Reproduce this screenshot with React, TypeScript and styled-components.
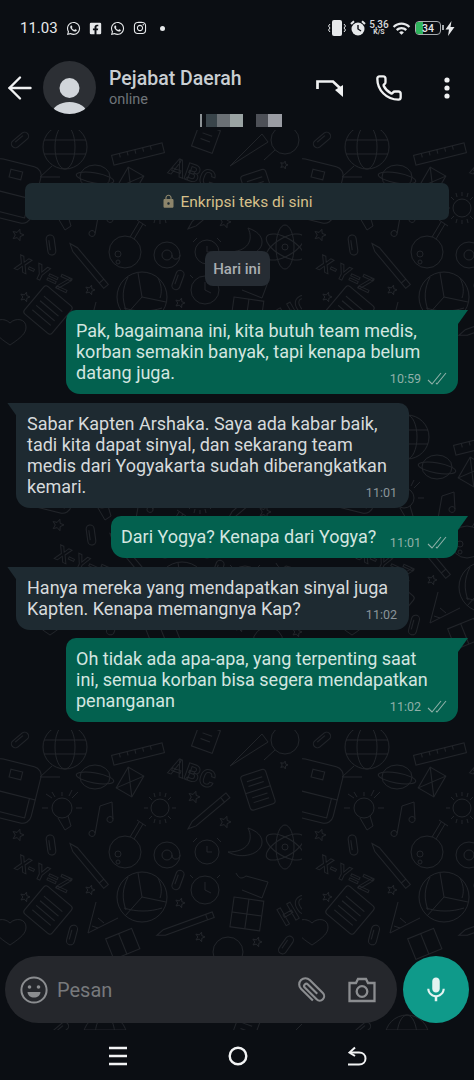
import React from 'react';
import styled, { createGlobalStyle } from 'styled-components';
import { FaWhatsapp, FaFacebookSquare, FaInstagram } from 'react-icons/fa';
import { MdLock, MdMic, MdWifi } from 'react-icons/md';
import { ArrowLeft, Phone } from 'lucide-react';

const GlobalStyle = createGlobalStyle`
    html, body {
        margin: 0;
        padding: 0;
        background: #0b0e13;
    }
    * {
        box-sizing: border-box;
    }
`;

const Screen = styled.div`
    width: 474px;
    height: 1080px;
    display: flex;
    flex-direction: column;
    overflow: hidden;
    background: #0b0e13;
    font-family: Roboto, "Liberation Sans", sans-serif;
`;

const StatusBar = styled.div`
    height: 56px;
    flex-shrink: 0;
    display: flex;
    align-items: center;
    padding: 0 19px 0 20px;
    color: #e6e8ea;
`;
const Clock = styled.span`
    font-size: 15px;
`;
const StatusLeft = styled.div`
    display: flex;
    align-items: center;
    gap: 8px;
`;
const Dot = styled.span`
    width: 5px;
    height: 5px;
    border-radius: 50%;
    background: #e6e8ea;
    margin-left: 5px;
`;
const StatusRight = styled.div`
    margin-left: auto;
    display: flex;
    align-items: center;
    gap: 4px;
`;
const Speed = styled.div`
    width: 18px;
    display: flex;
    flex-direction: column;
    align-items: center;
    font-size: 10px;
    line-height: 9px;
    font-weight: 500;
    color: #d8dadc;
    & > small {
        font-size: 7px;
        line-height: 7px;
        font-weight: 700;
    }
`;
const Battery = styled.div`
    position: relative;
    width: 26px;
    height: 14px;
    border: 1.5px solid #a9adb0;
    border-radius: 4px;
    display: flex;
    align-items: center;
    justify-content: center;
    font-size: 10.5px;
    font-weight: 500;
    color: #e6e8ea;
    &::before {
        content: '';
        position: absolute;
        left: 0;
        top: 0;
        bottom: 0;
        width: 7px;
        border-radius: 2px 0 0 2px;
        background: #2fb45c;
    }
    &::after {
        content: '';
        position: absolute;
        right: -4px;
        top: 3px;
        width: 2px;
        height: 5px;
        background: #a9adb0;
    }
    & > span {
        position: relative;
    }
`;

const Header = styled.div`
    position: relative;
    height: 74px;
    flex-shrink: 0;
    display: flex;
    align-items: flex-start;
    padding: 5px 0 0 2px;
    color: #f0f1f2;
`;
const BackButton = styled.div`
    height: 53px;
    display: flex;
    align-items: center;
    margin-right: 5px;
`;
const Avatar = styled.svg`
    width: 53px;
    height: 53px;
    flex-shrink: 0;
`;
const Title = styled.div`
    margin-left: 13px;
    padding-top: 7px;
    display: flex;
    flex-direction: column;
`;
const Name = styled.div`
    font-size: 19.5px;
    line-height: 21px;
    font-weight: 500;
    color: #c9ced2;
`;
const Online = styled.div`
    margin-top: 2px;
    font-size: 14.5px;
    line-height: 17px;
    color: #6f7479;
`;
const Actions = styled.div`
    margin-left: auto;
    height: 53px;
    display: flex;
    align-items: center;
    padding-right: 23px;
`;
const CallIcon = styled(Phone)`
    margin: 0 40px 0 32px;
`;
const CensorStrip = styled.div`
    position: absolute;
    left: 200px;
    top: 58px;
    height: 13px;
    display: flex;
`;
const CensorCell = styled.span<{ $w: number; $bg: string; $gap?: number }>`
    width: ${p => p.$w}px;
    background: ${p => p.$bg};
    margin-right: ${p => p.$gap ?? 0}px;
`;

const Chat = styled.div`
    position: relative;
    height: 900px;
    flex-shrink: 0;
    display: flex;
    flex-direction: column;
`;
const Wallpaper = styled.svg`
    position: absolute;
    left: 0;
    top: 0;
    width: 100%;
    height: 100%;
    color: #212429;
`;
const Messages = styled.div`
    position: relative;
    flex: 1;
    display: flex;
    flex-direction: column;
    padding: 53px 16px 0 16px;
`;
const EncryptionNote = styled.div`
    height: 37px;
    margin: 0 9px;
    border-radius: 7px;
    background: #1d2a30;
    color: #d6c08a;
    font-size: 15.5px;
    display: flex;
    align-items: center;
    justify-content: center;
    gap: 4px;
    & > svg {
        color: #8d856b;
    }
`;
const DateChip = styled.div`
    align-self: center;
    margin: 31px 0 24px;
    width: 65px;
    height: 35px;
    border-radius: 8px;
    background: #262c33;
    color: #a9aeb2;
    font-size: 15px;
    font-weight: 500;
    display: flex;
    align-items: center;
    justify-content: center;
`;
const Bubble = styled.div<{ $out?: boolean; $width: number }>`
    position: relative;
    width: ${p => p.$width}px;
    align-self: ${p => (p.$out ? 'flex-end' : 'flex-start')};
    margin-bottom: 8.5px;
    padding: ${p => (p.$out ? '10px 10px 11px 10px' : '10px 10px 11px 11px')};
    background: ${p => (p.$out ? '#03614f' : '#1e2a31')};
    color: ${p => (p.$out ? '#d3e6e0' : '#d6dadc')};
    border-radius: ${p => (p.$out ? '10px 0 14px 14px' : '0 10px 14px 14px')};
    font-size: 18px;
    line-height: 21px;
    white-space: nowrap;
    &::after {
        content: '';
        position: absolute;
        top: 0;
        width: 10px;
        height: 14px;
        background: inherit;
        ${p =>
            p.$out
                ? 'right: -10px; clip-path: polygon(0 0, 100% 0, 0 100%);'
                : 'left: -9px; clip-path: polygon(0 0, 100% 0, 100% 100%);'}
    }
`;
const Meta = styled.div<{ $out?: boolean }>`
    position: absolute;
    right: ${p => (p.$out ? 11 : 12)}px;
    bottom: 8px;
    display: flex;
    align-items: center;
    gap: 6px;
    font-size: 12.5px;
    line-height: 14px;
    color: ${p => (p.$out ? '#8fb0a8' : '#8a9499')};
`;

const Composer = styled.div`
    position: relative;
    height: 67px;
    display: flex;
    gap: 6px;
    padding: 0 5px;
    margin-bottom: 7px;
`;
const InputBar = styled.div`
    flex: 1;
    border-radius: 34px;
    background: #25272c;
    display: flex;
    align-items: center;
    padding: 0 21px 0 15px;
    color: #8b8d90;
`;
const Placeholder = styled.span`
    margin-left: 9px;
    font-size: 20px;
    color: #77797c;
`;
const InputActions = styled.div`
    margin-left: auto;
    display: flex;
    align-items: center;
    gap: 22px;
`;
const MicButton = styled.div`
    width: 66px;
    height: 67px;
    border-radius: 50%;
    background: #0f9a8a;
    color: #e4f3f1;
    display: flex;
    align-items: center;
    justify-content: center;
`;

const NavBar = styled.div`
    flex: 1;
    display: flex;
    align-items: center;
    justify-content: space-between;
    padding: 2px 107px 0 108px;
    color: #f2f3f4;
`;

const Star = ({ x, y, r = 6 }: { x: number; y: number; r?: number }) => {
    const pts: string[] = [];
    for (let i = 0; i < 10; i++) {
        const rad = i % 2 === 0 ? r : r * 0.45;
        const a = (Math.PI / 5) * i - Math.PI / 2 + 0.3;
        pts.push(`${(x + rad * Math.cos(a)).toFixed(1)},${(y + rad * Math.sin(a)).toFixed(1)}`);
    }
    return <polygon points={pts.join(' ')} />;
};

const Clip = ({ x, y, rot }: { x: number; y: number; rot: number }) => (
    <g transform={`translate(${x} ${y}) rotate(${rot})`}>
        <rect x={-4} y={-10} width={8} height={20} rx={4} />
        <path d="M-1.5 -5V5" />
    </g>
);

const Pencil = ({ x, y, rot, len = 50 }: { x: number; y: number; rot: number; len?: number }) => (
    <g transform={`translate(${x} ${y}) rotate(${rot})`}>
        <path d={`M${-len / 2} 0L${-len / 2 + 8} -3H${len / 2}V3H${-len / 2 + 8}Z`} />
        <path d={`M${len / 2 - 7} -3V3`} />
    </g>
);

// one tile of the chat wallpaper, copied by eye from the lower free area of the picture
const Doodles = () => (
    <g>
        {/* globe */}
        <circle cx={65} cy={17} r={22} />
        <ellipse cx={65} cy={17} rx={10} ry={22} />
        <path d="M44 10H86M44 24H86M52 36L40 47H60" />
        <Clip x={20} y={10} rot={50} />
        <g transform="rotate(-14 138 24)">
            <rect x={112} y={19} width={52} height={10} />
            <path d="M120 19v4M128 19v4M136 19v4M144 19v4M152 19v4" />
        </g>
        <g transform="rotate(20 205 8)">
            <rect x={195} y={-4} width={22} height={24} />
            <path d="M201 4h10M201 10h10" />
        </g>
        <path d="M230 36L262 4L268 12Z" />
        <circle cx={285} cy={10} r={14} />
        <path d="M275 20L264 30" />
        {/* backpack */}
        <g transform="rotate(14 12 60)">
            <rect x={-13} y={32} width={50} height={58} rx={9} />
            <path d="M-13 64H37M-7 64V84H31V64M6 40h12v8H6z" />
        </g>
        {/* planet */}
        <ellipse cx={95} cy={47} rx={15} ry={12} />
        <ellipse cx={95} cy={48} rx={19} ry={5} transform="rotate(10 95 48)" />
        <g transform="rotate(30 130 52)">
            <rect x={121} y={40} width={18} height={24} />
            <path d="M121 40L139 64M139 40L121 64" />
        </g>
        <text x={170} y={52} transform="rotate(20 195 40)" fontFamily="Roboto, sans-serif" fontSize={24} fontWeight={700} fill="none" stroke="currentColor" strokeWidth={0.9}>ABC</text>
        <g transform="rotate(-18 257 60)">
            <rect x={245} y={42} width={26} height={36} rx={3} />
            <path d="M245 60H271M250 49h16M250 54h16M250 66h16M250 71h16" />
        </g>
        {/* bulb */}
        <circle cx={62} cy={78} r={10} />
        <path d="M58 88L65 100L71 96L68 86M42 78H48M76 78H82M46 64L52 68M78 62L72 68M62 62V66M52 62L55 67M72 60L69 66" />
        <path d="M95 104L100 76L112 72L113 90M95 104a3 3 0 1 1 0 -1M113 90a3 3 0 1 1 0 -1" />
        {/* sun */}
        <circle cx={160} cy={78} r={9} />
        <path d="M160 62V66M160 90V94M144 78H148M172 78H176M149 67L152 70M171 67L168 70M149 89L152 86M171 89L168 86M154 63L155 67M166 63L165 67M154 93L155 89M166 93L165 89" />
        <Pencil x={208} y={82} rot={-40} len={52} />
        <Star x={225} y={92} />
        <Star x={194} y={67} />
        <Star x={284} y={35} r={4} />
        <Star x={18} y={105} />
        {/* flask */}
        <circle cx={125} cy={122} r={16} />
        <path d="M130 107L139 92M134 109L143 94M137 90L146 96" />
        <circle cx={118} cy={124} r={3} />
        <circle cx={118} cy={132} r={2} />
        {/* @ */}
        <circle cx={167} cy={125} r={13} />
        <circle cx={167} cy={125} r={5} />
        <path d="M172 125c0 6 8 5 8 0" />
        {/* alarm */}
        <circle cx={207} cy={122} r={12} />
        <path d="M197 108l-4 4M217 108l4 4M207 116v6h5" />
        {/* moon */}
        <path d="M248 98c6 12 0 24 -20 24c14 8 34 2 34 -10c0 -6 -5 -11 -14 -14Z" />
        {/* atom */}
        <ellipse cx={285} cy={117} rx={21} ry={9} transform="rotate(30 285 117)" />
        <ellipse cx={285} cy={117} rx={21} ry={9} transform="rotate(-30 285 117)" />
        <ellipse cx={285} cy={117} rx={9} ry={22} />
        <circle cx={285} cy={117} r={3} />
        <Clip x={51} y={115} rot={-8} />
        <text x={14} y={152} transform="rotate(25 45 145)" fontFamily="Roboto, sans-serif" fontSize={21} fontWeight={700} fill="none" stroke="currentColor" strokeWidth={0.9}>X-Y=Z</text>
        <Pencil x={88} y={135} rot={50} len={56} />
        {/* volleyball */}
        <circle cx={142} cy={167} r={25} />
        <path d="M142 167L138 143M142 167L166 172M142 167L125 186M128 147c-6 12 -6 22 -2 33M158 148c4 8 4 14 2 20M124 178c12 4 26 4 38 0" />
        <Clip x={178} y={150} rot={20} />
        {/* clock */}
        <circle cx={205} cy={160} r={14} />
        <path d="M193 148l-3 -3M217 148l3 -3M205 152v8l6 3" />
        <path d="M236 143c3 6 6 6 10 3L268 152L262 168L242 160" />
        <text x={275} y={190} transform="rotate(-30 292 175)" fontFamily="Roboto, sans-serif" fontSize={26} fontWeight={700} fill="none" stroke="currentColor" strokeWidth={0.9}>HO</text>
        <Star x={25} y={167} r={5} />
        <g transform="rotate(40 48 180)">
            <rect x={30} y={162} width={36} height={36} rx={3} />
            <path d="M36 172H60M36 178H60M36 184H60M36 190H60" />
        </g>
        <Star x={90} y={160} r={5} />
        <path d="M96 172L88 203L118 188M98 188L104 193M92 196L98 198" />
        <g transform="rotate(8 247 183)">
            <rect x={232} y={169} width={30} height={30} />
            <path d="M247 169V199M232 184H262" />
        </g>
        <Clip x={72} y={205} rot={15} />
        <path d="M10 215c-12 -8 -16 -12 -16 -18c0 -8 10 -10 16 -4c6 -6 16 -4 16 4c0 6 -4 10 -16 18Z" />
        <Pencil x={185} y={195} rot={-20} len={60} />
        <Star x={180} y={173} r={5} />
        <Star x={200} y={207} r={5} />
        <circle cx={228} cy={222} r={15} />
        <Star x={257} y={212} r={5} />
        <Clip x={286} y={215} rot={35} />
        <g transform="rotate(-22 122 212)">
            <rect x={108} y={203} width={28} height={22} />
            <path d="M122 203V225" />
        </g>
    </g>
);

const VibrateIcon = () => (
    <svg width="18" height="18" viewBox="0 0 18 18">
        <rect x="4" y="1" width="10" height="16" rx="2" fill="currentColor" />
        <path d="M2 5L0.500 7L2 9L0.500 11L2 13M16 5L17.500 7L16 9L17.500 11L16 13" fill="none" stroke="currentColor" strokeWidth="1" />
    </svg>
);

const AlarmIcon = () => (
    <svg width="16" height="16" viewBox="0 0 16 16">
        <circle cx="8" cy="9" r="6.500" fill="currentColor" />
        <path d="M1 4L4 1.200M15 4L12 1.200" stroke="currentColor" strokeWidth="2" />
        <path d="M8 5V9L11 11" fill="none" stroke="#0b0e13" strokeWidth="1.400" />
    </svg>
);

const BoltIcon = () => (
    <svg width="10" height="15" viewBox="0 0 10 15">
        <path d="M6.500 0L0.500 8.500H4L3 15L9.500 6H5.500Z" fill="currentColor" />
    </svg>
);

const VideoIcon = () => (
    <svg width="27" height="20" viewBox="0 0 27 20">
        <path d="M1.500 11V3.500H17L25 11" fill="none" stroke="currentColor" strokeWidth="2.700" />
        <path d="M27 7V19L19 12Z" fill="currentColor" />
    </svg>
);

const DotsIcon = () => (
    <svg width="8" height="22" viewBox="0 0 8 22">
        <circle cx="4" cy="3" r="2.600" fill="currentColor" />
        <circle cx="4" cy="11" r="2.600" fill="currentColor" />
        <circle cx="4" cy="19" r="2.600" fill="currentColor" />
    </svg>
);

const Checks = () => (
    <svg width="20" height="14" viewBox="0 0 20 14">
        <path d="M1 8L5 12L14 1M9 11L10 12L19 1" fill="none" stroke="currentColor" strokeWidth="1.100" />
    </svg>
);

const SmileIcon = () => (
    <svg width="28" height="28" viewBox="0 0 28 28">
        <circle cx="14" cy="14" r="12.600" fill="none" stroke="currentColor" strokeWidth="2" />
        <circle cx="9.500" cy="11" r="1.800" fill="currentColor" />
        <circle cx="18.500" cy="11" r="1.800" fill="currentColor" />
        <path d="M7.500 16H20.500C20 20 17.500 21.500 14 21.500C10.500 21.500 8 20 7.500 16Z" fill="currentColor" />
    </svg>
);

const ClipIcon = () => (
    <svg width="30" height="30" viewBox="-17 -17 34 34">
        <path
            d="M-7 10V-9A7 7 0 0 1 7 -9V12A5 5 0 0 1 -3 12V-7A2.500 2.500 0 0 1 2 -7V8"
            transform="rotate(-45)"
            fill="none"
            stroke="currentColor"
            strokeWidth="2.400"
        />
    </svg>
);

const CameraIcon = () => (
    <svg width="28" height="26" viewBox="0 0 28 26">
        <path d="M1.500 6H8L10 2H18L20 6H26.500V24H1.500Z" fill="none" stroke="currentColor" strokeWidth="2.300" />
        <circle cx="14" cy="14.500" r="5.300" fill="none" stroke="currentColor" strokeWidth="2.300" />
    </svg>
);

const MenuIcon = () => (
    <svg width="20" height="20" viewBox="0 0 20 20">
        <path d="M1 2H19M1 10H19M1 18H19" stroke="currentColor" strokeWidth="2.400" />
    </svg>
);

const HomeIcon = () => (
    <svg width="20" height="20" viewBox="0 0 20 20">
        <circle cx="10" cy="10" r="8.300" fill="none" stroke="currentColor" strokeWidth="2.400" />
    </svg>
);

const ReturnIcon = () => (
    <svg width="20" height="20" viewBox="0 0 20 20">
        <path d="M1 18.500H12C16 18.500 18.500 16 18.500 12.500C18.500 9 16 6.500 12 6.500H3" fill="none" stroke="currentColor" strokeWidth="2" />
        <path d="M8 1.500L2.500 6.500L8 10" fill="none" stroke="currentColor" strokeWidth="2" />
    </svg>
);

type Message = { out?: boolean; width: number; lines: string[]; time: string };

const messages: Message[] = [
    {
        out: true,
        width: 392,
        lines: ['Pak, bagaimana ini, kita butuh team medis,', 'korban semakin banyak, tapi kenapa belum', 'datang juga.'],
        time: '10:59',
    },
    {
        width: 393,
        lines: ['Sabar Kapten Arshaka. Saya ada kabar baik,', 'tadi kita dapat sinyal, dan sekarang team', 'medis dari Yogyakarta sudah diberangkatkan', 'kemari.'],
        time: '11:01',
    },
    { out: true, width: 347, lines: ['Dari Yogya? Kenapa dari Yogya?'], time: '11:01' },
    {
        width: 393,
        lines: ['Hanya mereka yang mendapatkan sinyal juga', 'Kapten. Kenapa memangnya Kap?'],
        time: '11:02',
    },
    {
        out: true,
        width: 392,
        lines: ['Oh tidak ada apa-apa, yang terpenting saat', 'ini, semua korban bisa segera mendapatkan', 'penanganan'],
        time: '11:02',
    },
];

function App(): JSX.Element {
    return (
        <Screen>
            <GlobalStyle />
            <StatusBar>
                <StatusLeft>
                    <Clock>11.03</Clock>
                    <FaWhatsapp size={15} />
                    <FaFacebookSquare size={13} />
                    <FaWhatsapp size={15} />
                    <FaInstagram size={14} />
                    <Dot />
                </StatusLeft>
                <StatusRight>
                    <VibrateIcon />
                    <AlarmIcon />
                    <Speed>
                        5,36
                        <small>K/S</small>
                    </Speed>
                    <MdWifi size={19} />
                    <Battery>
                        <span>34</span>
                    </Battery>
                    <BoltIcon />
                </StatusRight>
            </StatusBar>

            <Header>
                <BackButton>
                    <ArrowLeft size={36} strokeWidth={1.6} />
                </BackButton>
                <Avatar viewBox="0 0 53 53">
                    <clipPath id="avatar-clip">
                        <circle cx="26.500" cy="26.500" r="26.500" />
                    </clipPath>
                    <g clipPath="url(#avatar-clip)">
                        <rect width="53" height="53" fill="#2c2f34" />
                        <circle cx="26.500" cy="27" r="10" fill="#d1d5da" />
                        <ellipse cx="26.500" cy="53" rx="17.500" ry="12" fill="#d1d5da" />
                    </g>
                </Avatar>
                <Title>
                    <Name>Pejabat Daerah</Name>
                    <Online>online</Online>
                </Title>
                <Actions>
                    <VideoIcon />
                    <CallIcon size={28} strokeWidth={2} />
                    <DotsIcon />
                </Actions>
                <CensorStrip>
                    <CensorCell $w={2} $bg="#8d9396" $gap={4} />
                    <CensorCell $w={11} $bg="#39444a" />
                    <CensorCell $w={13} $bg="#6b7075" />
                    <CensorCell $w={13} $bg="#9aa3a3" $gap={13} />
                    <CensorCell $w={12} $bg="#4d5057" />
                    <CensorCell $w={14} $bg="#9a9ca3" />
                </CensorStrip>
            </Header>

            <Chat>
                <Wallpaper>
                    <defs>
                        <pattern id="doodles" width="302" height="600" patternUnits="userSpaceOnUse">
                            <g fill="none" stroke="currentColor" strokeWidth="1">
                                <Doodles />
                                <g transform="translate(40 290)">
                                    <Doodles />
                                </g>
                            </g>
                        </pattern>
                    </defs>
                    <rect width="100%" height="100%" fill="url(#doodles)" />
                </Wallpaper>
                <Messages>
                    <EncryptionNote>
                        <MdLock size={15} />
                        Enkripsi teks di sini
                    </EncryptionNote>
                    <DateChip>Hari ini</DateChip>
                    {messages.map(({ out, width, lines, time }) => (
                        <Bubble key={lines[0]} $out={out} $width={width}>
                            {lines.map(line => (
                                <div key={line}>{line}</div>
                            ))}
                            <Meta $out={out}>
                                {time}
                                {out && <Checks />}
                            </Meta>
                        </Bubble>
                    ))}
                </Messages>
                <Composer>
                    <InputBar>
                        <SmileIcon />
                        <Placeholder>Pesan</Placeholder>
                        <InputActions>
                            <ClipIcon />
                            <CameraIcon />
                        </InputActions>
                    </InputBar>
                    <MicButton>
                        <MdMic size={30} />
                    </MicButton>
                </Composer>
            </Chat>

            <NavBar>
                <MenuIcon />
                <HomeIcon />
                <ReturnIcon />
            </NavBar>
        </Screen>
    );
}

export default App;
